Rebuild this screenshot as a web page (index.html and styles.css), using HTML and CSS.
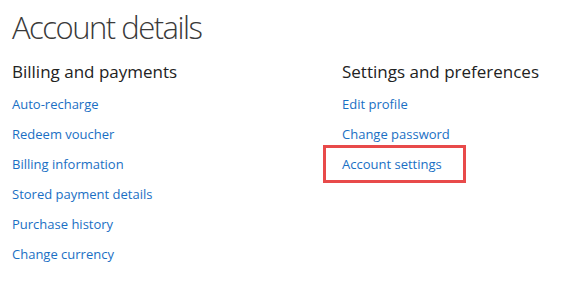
FILE: index.html
```html
<!DOCTYPE html>
<html lang="en">
<head>
  <meta charset="UTF-8">
  <title>Account details</title>
  <link rel="stylesheet" href="styles.css">
</head>
<body>
  <div class="page">
    <h1>Account details</h1>

    <div class="columns">
      <!-- Billing -->
      <div class="section">
        <h2>Billing and payments</h2>
        <ul class="links">
          <li><a href="#">Auto-recharge</a></li>
          <li><a href="#">Redeem voucher</a></li>
          <li><a href="#">Billing information</a></li>
          <li><a href="#">Stored payment details</a></li>
          <li><a href="#">Purchase history</a></li>
          <li><a href="#">Change currency</a></li>
        </ul>
      </div>

      <!-- Settings -->
      <div class="section">
        <h2>Settings and preferences</h2>
        <ul class="links">
          <li><a href="#">Edit profile</a></li>
          <li><a href="#">Change password</a></li>
          <li class="highlight"><a href="#">Account settings</a></li>
        </ul>
      </div>
    </div>
  </div>
</body>
</html>
```

FILE: styles.css
```css
body {
  margin: 0;
  background: #fff;
  font-family: "Open Sans", "Noto Sans", sans-serif;
  color: #333;
}
.page {
  padding: 7px 12px 0;
}
h1 {
  margin: 0;
  font-size: 31px;
  font-weight: 300;
  line-height: 40px;
  color: #3a3a3a;
  letter-spacing: -1.5px;
}
.columns {
  display: grid;
  grid-template-columns: 330px 1fr;
  margin-top: 13px;
}
h2 {
  margin: 0 0 4px;
  font-size: 17px;
  font-weight: 400;
  line-height: 24px;
  color: #222;
  white-space: nowrap;
}
.links {
  list-style: none;
  margin: 0;
  padding: 0;
}
.links li {
  height: 30px;
  line-height: 30px;
}
.links a {
  font-size: 13px;
  color: #1a6fc4;
  text-decoration: none;
}
.highlight {
  position: relative;
}
.highlight::before {
  content: "";
  position: absolute;
  left: -19px;
  top: -3px;
  width: 137px;
  height: 32px;
  border: 3px solid #e84a4a;
}
```
